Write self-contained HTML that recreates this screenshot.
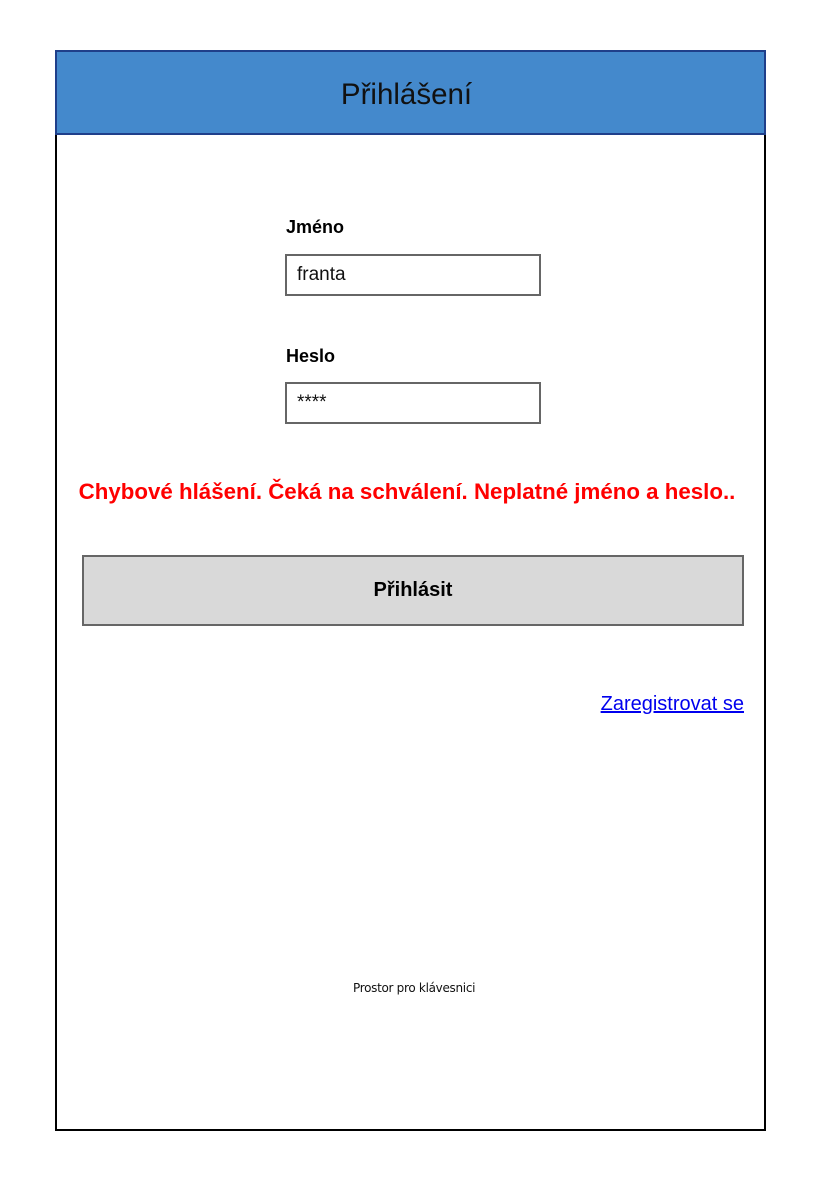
<!DOCTYPE html>
<html><head><meta charset="utf-8"><style>
*{margin:0;padding:0;box-sizing:border-box}
body{width:820px;height:1180px;background:#fff;font-family:"Liberation Sans",sans-serif;position:relative}
.frame{position:absolute;left:55px;top:50px;width:711px;height:1081px;border:2px solid #000}
.hdr{position:absolute;left:55px;top:50px;width:703px;height:85px;background:#4489cc;border:2px solid #1f3f8a;text-align:center;line-height:85px;font-size:29.5px;color:#111}
.hdr2{position:absolute;left:55px;top:50px;width:711px;height:85px;border:2px solid #1f3f8a}
.lbl{position:absolute;left:286px;font-size:18px;font-weight:bold;color:#000}
.inp{position:absolute;left:285px;width:256px;height:42px;border:2px solid #666;font-size:19px;padding-left:10px;line-height:38px;color:#111}
.err{position:absolute;left:55px;width:704px;top:479px;text-align:center;color:#f00;font-weight:bold;font-size:22.3px;white-space:nowrap}
.btn{position:absolute;left:82px;top:555px;width:662px;height:71px;background:#d9d9d9;border:2px solid #666;text-align:center;line-height:67px;font-size:20px;font-weight:bold}
.lnk{position:absolute;right:76px;top:693px;font-size:20px;color:#00e;text-decoration:underline}
.ft{position:absolute;left:353px;top:981px;font-size:12px;color:#111;font-family:"Comic Sans MS","DejaVu Sans",sans-serif;letter-spacing:-0.3px}
</style></head><body>
<div class="frame"></div>
<div class="hdr" style="width:711px;padding-right:8px">Přihlášení</div>
<div class="lbl" style="top:217px">Jméno</div>
<div class="inp" style="top:254px">franta</div>
<div class="lbl" style="top:346px">Heslo</div>
<div class="inp" style="top:382px">****</div>
<div class="err">Chybové hlášení. Čeká na schválení. Neplatné jméno a heslo..</div>
<div class="btn">Přihlásit</div>
<div class="lnk">Zaregistrovat se</div>
<div class="ft">Prostor pro klávesnici</div>
</body></html>
